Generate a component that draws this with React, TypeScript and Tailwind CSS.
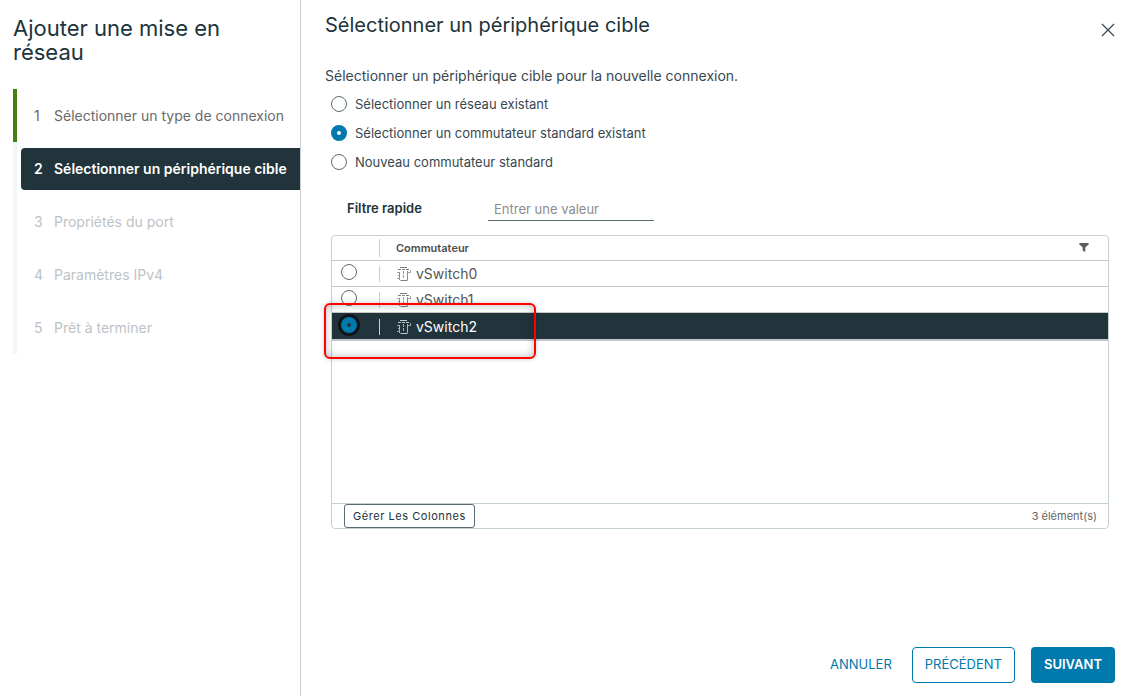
import React, { useState } from 'react';

const STEPS = [
  'Sélectionner un type de connexion',
  'Sélectionner un périphérique cible',
  'Propriétés du port',
  'Paramètres IPv4',
  'Prêt à terminer',
];

const TARGETS = [
  'Sélectionner un réseau existant',
  'Sélectionner un commutateur standard existant',
  'Nouveau commutateur standard',
];

const SWITCHES = ['vSwitch0', 'vSwitch1', 'vSwitch2'];

const CURRENT_STEP = 1;

function SwitchIcon({ light }: { light: boolean }) {
  return (
    <svg
      width="14"
      height="14"
      viewBox="0 0 14 14"
      fill="none"
      stroke="currentColor"
      aria-hidden="true"
      className={`shrink-0 ${light ? 'text-[#c4cbce]' : 'text-[#7d7d7d]'}`}
    >
      <path d="M3 .5h7M3.5 13.5h7" />
      <path d="M2.5 5v8M10.5 4v9" strokeOpacity=".85" />
      <path d="M1 2.5h12" strokeDasharray="3 1" />
      <path d="M13.5 3v3M11 5.5h2M0 5.5h2M1 8.5h1M0 11.5h2" strokeOpacity=".7" />
      <path d="M6.5 4v7" strokeDasharray="3 1" strokeOpacity=".8" />
    </svg>
  );
}

function Sidebar() {
  return (
    <aside className="w-[301px] shrink-0 border-r border-[#c4ced3] pl-[13px] pt-4">
      <h1 className="pr-10 text-[22px] leading-6 text-[#21333b]">Ajouter une mise en réseau</h1>
      <ol className="mt-[25px]">
        {STEPS.map((step, i) => {
          const done = i < CURRENT_STEP;
          const current = i === CURRENT_STEP;
          return (
            <li key={step} className={`border-l-4 pb-[5px] pl-1 pt-1.5 ${done ? 'border-[#42810e]' : 'border-[#f1f6f8]'}`}>
              <button
                type="button"
                disabled={i > CURRENT_STEP}
                aria-current={current ? 'step' : undefined}
                className={`flex h-[42px] w-full items-center whitespace-nowrap rounded-l text-left text-sm ${
                  current ? 'bg-[#21333b] font-semibold text-white' : done ? 'text-[#6a6a6a]' : 'text-[#bcc3c7]'
                }`}
              >
                <span className="w-[33px] pl-[13px]">{i + 1}</span>
                <span>{step}</span>
              </button>
            </li>
          );
        })}
      </ol>
    </aside>
  );
}

function TargetOptions() {
  const [target, setTarget] = useState(1);
  return (
    <fieldset aria-label="Périphérique cible" className="mt-2 flex flex-col gap-[9px] pl-1.5">
      {TARGETS.map((label, i) => (
        <label key={label} className="flex items-center gap-2 self-start text-[13px] leading-5 text-[#374850]">
          <input
            type="radio"
            name="target"
            checked={target === i}
            onChange={() => setTarget(i)}
            className="size-4 shrink-0 appearance-none rounded-full border border-[#5b6b74] bg-white checked:border-[6px] checked:border-[#0079ad]"
          />
          {label}
        </label>
      ))}
    </fieldset>
  );
}

function SwitchGrid() {
  const [selected, setSelected] = useState(2);
  return (
    <div className="relative ml-1.5 mt-[14px] rounded border border-[#c4d0d6]">
      <div className="min-h-[267px]">
        <table className="w-full table-fixed border-collapse text-left">
          <thead>
            <tr className="h-6 border-b border-[#c8c8c8]">
              <th aria-label="Sélection" className="w-12 p-0">
                <div className="h-[18px] border-r border-[#c4ced3]" />
              </th>
              <th className="p-0 pl-4 text-[11px] font-semibold text-[#4d4d4d]">
                <div className="flex items-center justify-between pr-[19px]">
                  Commutateur
                  <button type="button" aria-label="Filtrer" className="text-[#5c5c5c]">
                    <svg width="10" height="9" viewBox="0 0 10 9" fill="currentColor" aria-hidden="true">
                      <path d="M.3 0h9.4v1.2L6.3 4.5V9L3.7 7.7V4.5L.3 1.2z" />
                    </svg>
                  </button>
                </div>
              </th>
            </tr>
          </thead>
          <tbody>
            {SWITCHES.map((name, i) => {
              const on = selected === i;
              return (
                <tr
                  key={name}
                  className={
                    on
                      ? 'h-7 border-b-2 border-[#c4c8ca] bg-[#21333b] text-white'
                      : 'h-[26px] border-b border-[#c8c8c8] text-[#565656]'
                  }
                >
                  <td className="p-0 pt-0.5">
                    <div className="flex h-4 items-center border-r border-[#c4ced3] pb-1 pl-[9px]">
                      <input
                        type="radio"
                        name="switch"
                        aria-label={name}
                        checked={on}
                        onChange={() => setSelected(i)}
                        className="size-4 shrink-0 appearance-none rounded-full border border-[#5b6b74] bg-white checked:border-[6px] checked:border-[#0079ad] checked:bg-[#21333b] checked:ring-3 checked:ring-[#101418]"
                      />
                    </div>
                  </td>
                  <td className="p-0 pl-[17px] pt-0.5">
                    <div className="flex items-center gap-[5px] text-sm">
                      <SwitchIcon light={on} />
                      {name}
                    </div>
                  </td>
                </tr>
              );
            })}
          </tbody>
        </table>
      </div>
      <div className="flex h-[25px] items-center justify-between border-t border-[#c4d0d6] pl-3 pr-[11px]">
        <button type="button" className="h-6 rounded-[3px] border border-[#5b6b74] px-2 text-[11px] tracking-wider text-[#21333b]">
          Gérer Les Colonnes
        </button>
        <span className="text-[11px] text-[#666666]">3 élément(s)</span>
      </div>
      <div
        aria-hidden="true"
        className="pointer-events-none absolute -left-2 top-[67px] h-14 w-[212px] rounded-md border-2 border-[#ff0000] shadow-[0_0_5px_rgba(0,0,0,0.2),inset_0_0_8px_rgba(0,0,0,0.28)]"
      />
    </div>
  );
}

export default function App() {
  return (
    <div className="flex min-h-screen bg-white font-['Inter',sans-serif] text-[#21333b]">
      <Sidebar />
      <main className="flex min-w-0 flex-1 flex-col pb-[13px] pl-6 pt-3">
        <header className="flex items-start justify-between pr-4">
          <h2 className="text-[20px] leading-[26px]">Sélectionner un périphérique cible</h2>
          <button type="button" aria-label="Fermer" className="mt-[11px] text-[#3b4c56]">
            <svg width="14" height="14" viewBox="0 0 14 14" fill="none" stroke="currentColor" strokeWidth="1.3" aria-hidden="true">
              <path d="M1 1l12 12M13 1L1 13" />
            </svg>
          </button>
        </header>
        <section className="mt-[28px] pr-[22px]">
          <p className="text-sm leading-5 text-[#374850]">Sélectionner un périphérique cible pour la nouvelle connexion.</p>
          <TargetOptions />
          <div className="mt-[25px] flex items-center pl-[22px] text-[13px]">
            <label htmlFor="quick-filter" className="w-[141px] font-semibold">
              Filtre rapide
            </label>
            <input
              id="quick-filter"
              type="text"
              placeholder="Entrer une valeur"
              className="h-6 w-[166px] border-b border-[#5b6b74] bg-transparent px-1.5 outline-none placeholder:text-[#8c8c8c]"
            />
          </div>
          <SwitchGrid />
        </section>
        <footer className="mt-auto flex items-center justify-end gap-4 pr-4 text-[13px]">
          <button type="button" className="h-9 px-1 text-[#0079ad]">
            ANNULER
          </button>
          <button type="button" className="h-9 rounded border border-[#0079ad] px-3 text-[#0079ad]">
            PRÉCÉDENT
          </button>
          <button type="button" className="h-9 rounded bg-[#0079ad] px-[13px] font-semibold text-white">
            SUIVANT
          </button>
        </footer>
      </main>
    </div>
  );
}
